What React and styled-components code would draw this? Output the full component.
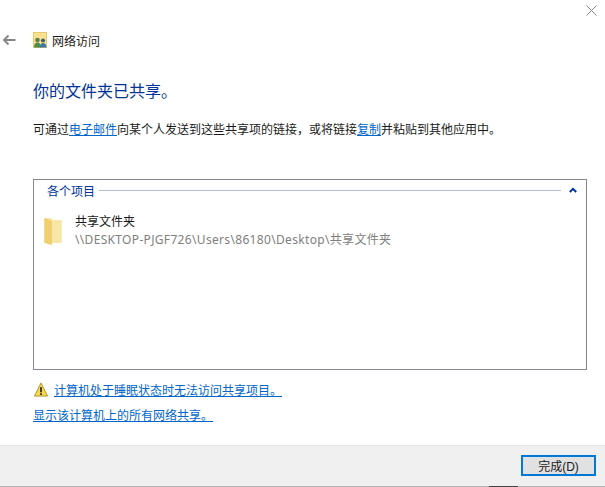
import styled, { createGlobalStyle } from "styled-components";

const GlobalStyle = createGlobalStyle`
    html, body {
        margin: 0;
        padding: 0;
        background: #fff;
    }
`

const Dialog = styled.div`
    display: flex;
    flex-direction: column;
    width: 605px;
    height: 487px;
    overflow: hidden;
    background: #fff;
    font-family: "Liberation Sans", "Noto Sans CJK SC", sans-serif;
    font-size: 12px;
    color: #1a1a1a;
`

const TitleBar = styled.div`
    display: flex;
    justify-content: flex-end;
    height: 28px;
    padding: 5px 8px 0 0;
    box-sizing: border-box;
`

const NavRow = styled.div`
    display: flex;
    align-items: center;
    height: 24px;
    padding-left: 2px;
`

const BackIcon = styled.svg`
    width: 14px;
    height: 12px;
    margin-right: 17px;
`

const AppIcon = styled.svg`
    width: 14px;
    height: 16px;
    margin-right: 5px;
`

const Content = styled.div`
    display: flex;
    flex-direction: column;
    flex: 1;
    padding: 0 18px 0 33px;
`

const Heading = styled.h1`
    margin: 28px 0 0;
    font-size: 16px;
    font-weight: 400;
    line-height: 24px;
    color: #003399;
`

const Intro = styled.p`
    margin: 18px 0 0;
    line-height: 17px;
`

const TextLink = styled.a`
    color: #0066cc;
    text-decoration: underline;
`

const ItemsBox = styled.div`
    display: flex;
    flex-direction: column;
    width: 554px;
    height: 191px;
    margin-top: 40px;
    border: 1px solid #828790;
    box-sizing: border-box;
`

const GroupHeader = styled.div`
    display: flex;
    align-items: center;
    height: 20px;
    padding: 0 9px 0 13px;
    color: #003399;
`

const GroupRule = styled.div`
    flex: 1;
    height: 1px;
    margin: 0 8px 0 4px;
    background: #b4bdd8;
`

const Chevron = styled.svg`
    width: 8px;
    height: 6px;
`

const ItemRow = styled.div`
    display: flex;
    align-items: flex-start;
    margin-top: 13px;
    padding-left: 10px;
`

const FolderIcon = styled.svg`
    width: 18px;
    height: 28px;
    margin: 5px 13px 0 0;
`

const ItemText = styled.div`
    display: flex;
    flex-direction: column;
    line-height: 18px;
`

const ItemPath = styled.span`
    font-family: "Noto Sans", "Noto Sans CJK SC", sans-serif;
    letter-spacing: .33px;
    color: #808080;
`

const Notice = styled.div`
    display: flex;
    align-items: center;
    margin-top: 11px;
    height: 17px;
`

const WarnIcon = styled.svg`
    width: 16px;
    height: 15px;
    margin-right: 5px;
`

const SharesLink = styled(TextLink)`
    margin-top: 10px;
    line-height: 17px;
    align-self: flex-start;
`

const Footer = styled.div`
    position: relative;
    display: flex;
    justify-content: flex-end;
    align-items: flex-start;
    height: 42px;
    padding: 9px 9px 0 0;
    box-sizing: border-box;
    background: #f0f0f0;
    border-top: 1px solid #e5e5e5;
    border-bottom: 1px solid #b5b5b5;
`

const EdgeMark = styled.div`
    position: absolute;
    left: 489px;
    bottom: -1px;
    width: 29px;
    height: 1px;
    background: #444;
`

const DoneButton = styled.button`
    width: 75px;
    height: 21px;
    padding: 0;
    border: 2px solid #0078d7;
    background: #e1e1e1;
    font: inherit;
    color: #1a1a1a;
`

export default function App() {
    return (
        <Dialog>
            <GlobalStyle />

            <TitleBar>
                <svg width="11" height="11" viewBox="0 0 11 11">
                    <path d="M.5.5l10 10M10.5.5l-10 10" stroke="#8a8a8a" fill="none" />
                </svg>
            </TitleBar>

            <NavRow>
                <BackIcon viewBox="0 0 14 12">
                    <path d="M13.500 6H2M6.500 1.500L2 6l4.500 4.500" stroke="#858585" strokeWidth="1.800" fill="none" />
                </BackIcon>
                <AppIcon viewBox="0 0 14 16">
                    <rect width="13" height="15" x=".5" y=".5" fill="#f8e08f" stroke="#e6c96c" />
                    <circle cx="4.500" cy="8" r="2.300" fill="#5e7f4e" />
                    <circle cx="10" cy="8.500" r="2.100" fill="#45606e" />
                    <path d="M1 15.500c0-3.500 1.500-5 3.500-5s3.500 1.500 3.500 5z" fill="#4d8a4d" />
                    <path d="M7 15.500c0-3 1-4.500 3-4.500s3.500 1.500 3.500 4.500z" fill="#3f78a8" />
                </AppIcon>
                网络访问
            </NavRow>

            <Content>
                <Heading>你的文件夹已共享。</Heading>
                <Intro>
                    可通过<TextLink>电子邮件</TextLink>向某个人发送到这些共享项的链接，或将链接<TextLink>复制</TextLink>并粘贴到其他应用中。
                </Intro>

                <ItemsBox>
                    <GroupHeader>
                        各个项目
                        <GroupRule />
                        <Chevron viewBox="0 0 8 6">
                            <path d="M.8 5L4 1.800 7.200 5" stroke="#003399" strokeWidth="2" fill="none" />
                        </Chevron>
                    </GroupHeader>
                    <ItemRow>
                        <FolderIcon viewBox="0 0 18 29">
                            <path d="M0 0h7l2 2h9v24H8l-8 0z" fill="#f8e6a6" />
                            <path d="M0 0l8 3v25l-8-2z" fill="#f0cf72" />
                        </FolderIcon>
                        <ItemText>
                            <span>共享文件夹</span>
                            <ItemPath>\\DESKTOP-PJGF726\Users\86180\Desktop\共享文件夹</ItemPath>
                        </ItemText>
                    </ItemRow>
                </ItemsBox>

                <Notice>
                    <WarnIcon viewBox="0 0 16 16">
                        <path d="M8 1l7 14H1z" fill="#fbd84b" stroke="#a8922a" strokeLinejoin="round" />
                        <rect x="7.100" y="5.500" width="1.800" height="5.500" fill="#222" />
                        <rect x="7.100" y="12" width="1.800" height="1.800" fill="#222" />
                    </WarnIcon>
                    <TextLink>计算机处于睡眠状态时无法访问共享项目。</TextLink>
                </Notice>
                <SharesLink>显示该计算机上的所有网络共享。</SharesLink>
            </Content>

            <Footer>
                <DoneButton>完成(D)</DoneButton>
                <EdgeMark />
            </Footer>
        </Dialog>
    );
}
